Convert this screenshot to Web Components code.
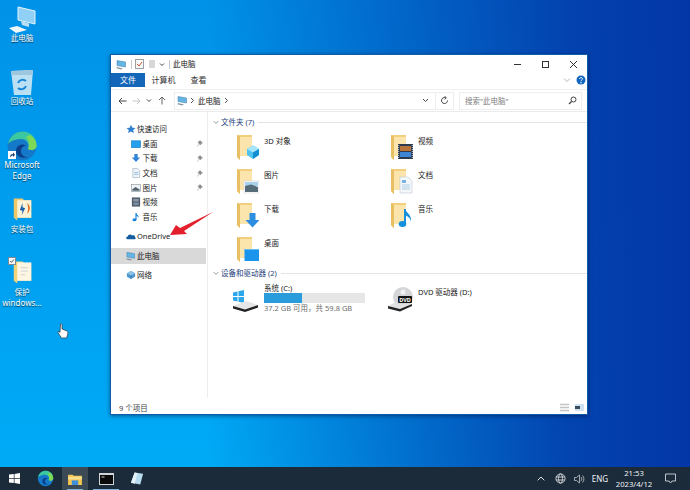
<!DOCTYPE html>
<html lang="zh">
<head>
<meta charset="utf-8">
<title>此电脑</title>
<style>
  html, body { margin: 0; height: 100%; overflow: hidden; }
  body { font-family: "Noto Sans", "Noto Sans CJK SC", sans-serif; }
</style>
</head>
<body>
<win-desktop>
  <desk-icon slot="icons" kind="pc" style="left:0;top:3px">此电脑</desk-icon>
  <desk-icon slot="icons" kind="bin" style="left:0;top:66px">回收站</desk-icon>
  <desk-icon slot="icons" kind="edge" style="left:0;top:130px"><span style="font-size:8px">Microsoft<br>Edge</span></desk-icon>
  <desk-icon slot="icons" kind="setup" style="left:0;top:194px">安装包</desk-icon>
  <desk-icon slot="icons" kind="docs" style="left:0;top:257px">保护<br><span style="font-size:8px">windows...</span></desk-icon>

  <explorer-window slot="window">
    <nav-item slot="nav" kind="star" level="0" style="margin-top:10px">快速访问</nav-item>
    <nav-item slot="nav" kind="desk" pinned>桌面</nav-item>
    <nav-item slot="nav" kind="down" pinned>下载</nav-item>
    <nav-item slot="nav" kind="doc" pinned>文档</nav-item>
    <nav-item slot="nav" kind="pic" pinned>图片</nav-item>
    <nav-item slot="nav" kind="film">视频</nav-item>
    <nav-item slot="nav" kind="note">音乐</nav-item>
    <nav-item slot="nav" kind="cloud" level="0" style="margin-top:5px">OneDrive</nav-item>
    <nav-item slot="nav" kind="pc" level="0" selected style="margin-top:4px">此电脑</nav-item>
    <nav-item slot="nav" kind="net" level="0" style="margin-top:4px">网络</nav-item>

    <group-head slot="content">文件夹 (7)</group-head>
    <div slot="content" style="display:grid;grid-template-columns:154px 1fr;grid-auto-rows:34px;margin:5px 0 0 29px">
      <folder-tile kind="cube">3D 对象</folder-tile>
      <folder-tile kind="film">视频</folder-tile>
      <folder-tile kind="pic">图片</folder-tile>
      <folder-tile kind="doc">文档</folder-tile>
      <folder-tile kind="down">下载</folder-tile>
      <folder-tile kind="note">音乐</folder-tile>
      <folder-tile kind="desk">桌面</folder-tile>
    </div>
    <group-head slot="content" style="margin-top:-2px">设备和驱动器 (2)</group-head>
    <div slot="content" style="display:grid;grid-template-columns:154px 1fr;margin:4px 0 0 24px">
      <drive-tile used="37.600" free="37.2 GB 可用，共 59.8 GB">系统 (C:)</drive-tile>
      <drive-tile kind="dvd">DVD 驱动器 (D:)</drive-tile>
    </div>
  </explorer-window>
</win-desktop>

<script>
const FOLDER = `<path d="M0 1 H15 V22 H3 V26 L0 23Z" fill="#f2cf7c"/><path d="M3 3 H15 V22 H3Z" fill="#fbe5ac"/><path d="M0 1 L3 3 V26 L0 23Z" fill="#e8bf63"/>`

const OVERLAYS = {
  cube: `<path d="M14 17 L20 13.500 L26 17 V23 L20 27 L14 23Z" fill="#4fc3ee"/><path d="M14 17 L20 20.500 L26 17 L20 13.500Z" fill="#a5e6fa"/><path d="M20 20.500 L26 17 V23 L20 27Z" fill="#128ed0"/>`,
  film: `<rect x="11" y="12" width="15" height="15" fill="#2f3b4c"/><rect x="13" y="14" width="11" height="5" fill="#b8743a"/><rect x="13" y="20" width="11" height="5" fill="#3d86d6"/><path d="M11.700 13v13M25.300 13v13" stroke="#dfe6ee" stroke-width=".9" stroke-dasharray="1 1"/>`,
  pic: `<rect x="11" y="15" width="15" height="12" fill="#fff" stroke="#c6ccd2" stroke-width=".5"/><rect x="12" y="16" width="13" height="4" fill="#a9d2ec"/><path d="M12 20 L18 18.500 L25 21 V26 H12Z" fill="#566c78"/>`,
  doc: `<path d="M13 11 H21 L25 15 V27 H13Z" fill="#f5f8fb" stroke="#bcc8d4" stroke-width=".6"/><path d="M15 19h8M15 21h8M15 23h8" stroke="#9cc0de" stroke-width=".8"/><rect x="15" y="14" width="4" height="3" fill="#7cb2de"/>`,
  down: `<path d="M16.500 13 H22.500 V20 H26.500 L19.500 27.500 L12.500 20 H16.500Z" fill="#2d8de0"/>`,
  note: `<path d="M18 9 V23" stroke="#1690dc" stroke-width="2" fill="none"/><ellipse cx="15.500" cy="24" rx="3.800" ry="3" fill="#1690dc"/><path d="M18 9 C19 13 25 14 24 22 C23.500 17 20 16.500 18 15Z" fill="#1690dc"/>`,
  desk: `<rect x="11.500" y="15" width="15" height="12" fill="#1b95ec"/><rect x="11.500" y="15" width="15" height="1" fill="#63bdf5"/>`
}

const NAV_ICONS = {
  star: `<path d="M5.500 .8 L7 4 L10.500 4.300 L7.900 6.500 L8.700 10 L5.500 8.200 L2.300 10 L3.100 6.500 L.5 4.300 L4 4Z" fill="#2f7fd0"/>`,
  desk: `<rect x=".5" y="2" width="10" height="7.500" fill="#25a0ec" stroke="#1679c4" stroke-width=".7"/>`,
  down: `<path d="M3.700 1 H7.300 V5 H10 L5.500 10 L1 5 H3.700Z" fill="#2f83d8"/>`,
  doc: `<path d="M2 .5 H7 L9.500 3 V10.500 H2Z" fill="#eef3f8" stroke="#8fa4b8" stroke-width=".6"/><path d="M3.500 5h4.500M3.500 7h4.500" stroke="#6fa5d4" stroke-width=".7"/>`,
  pic: `<rect x=".5" y="1.500" width="10" height="8" fill="#eef2f6" stroke="#7e8a94" stroke-width=".6"/><path d="M1.500 7 L5 4.500 L9.500 7.200 V8.500 H1.500Z" fill="#50626e"/>`,
  film: `<rect x="1" y=".5" width="9" height="10" fill="#4c5866"/><rect x="2.500" y="2" width="6" height="3" fill="#8b98a8"/><rect x="2.500" y="6" width="6" height="3" fill="#7c8fa6"/>`,
  note: `<path d="M5.500 1 V8.500" stroke="#1c86d6" stroke-width="1.300"/><ellipse cx="3.800" cy="8.500" rx="2.200" ry="1.700" fill="#1c86d6"/><path d="M5.500 1 C6 3 8.800 3.200 8.300 6.500 C7.800 4.600 6.500 4.400 5.500 4Z" fill="#1c86d6"/>`,
  cloud: `<path d="M1.500 9 C-.3 9 -.2 6.200 1.800 6.100 C2.200 3.300 5.800 3.100 6.600 5 C8.500 4 10.500 5.500 9.800 7 C11 7.200 11 9 9.800 9Z" fill="#155d9e"/>`,
  pc: `<path d="M1 1.500 L9.500 3 V8 L1 6.500Z" fill="#66b4e4" stroke="#3679a8" stroke-width=".5"/><path d="M.8 8 L7 9.400 L5 10.500 L.5 9.300Z" fill="#8496a4"/>`,
  net: `<path d="M5.500 1 L10 3.500 L10 7.500 L5.500 10 L1 7.500 V3.500Z" fill="#4f96cf"/><path d="M5.500 1 L10 3.500 L5.500 6 L1 3.500Z" fill="#8cc2e6"/><path d="M5.500 6 V10" stroke="#2f6c9e" stroke-width=".6"/>`
}

const DESK_ICONS = {
  pc: `<svg width="32" height="28" viewBox="0 0 32 28"><path d="M12 2 L29 6 V19 L12 15Z" fill="#8fd0f4" stroke="#e2f4fd" stroke-width="1"/><path d="M15 16 L23 18.500 L23 22 L16 20Z" fill="#bfe0f2"/><path d="M3 23 L11 21 L21 25 L10 28Z" fill="#f2f7fa"/></svg>`,
  bin: `<svg width="32" height="28" viewBox="0 0 32 28"><path d="M5 3 L27 2 L25 27 H8Z" fill="#cfe8f4" fill-opacity=".9"/><path d="M5 3 L27 2 L26 7 H6Z" fill="#9ec6dc"/><path d="M12 15 A5 5 0 0 1 20 13 M20 18 A5 5 0 0 1 12 20" stroke="#1a86d8" stroke-width="2" fill="none"/></svg>`,
  edge: `<svg width="32" height="32" viewBox="0 0 32 32"><circle cx="16" cy="16" r="14.500" fill="#1379c8"/><path d="M2 14 C4 3 14 1 18 1.600 C26 2.500 31 9 30.500 16 C30.500 20 25 21 22 19 C24 15 21 9 15 9 C9 9 3 12 2 14Z" fill="#3bc8a0"/><path d="M24 5 C29 8 31 13 30.500 16.500 C30 20 25 21 22 19 C24 15 23 10 20 7Z" fill="#7ed957"/><path d="M10 21 C10 27 17 29 22 27 C18 27 15 25 15 21 C15 18 17 16 20 16 C18 13 10 14 10 21Z" fill="#0c3f8a"/></svg>`,
  setup: `<svg width="21" height="26" viewBox="0 0 24 28"><path d="M2 2 H12 L14 4 H22 V24 H6 V27 L2 24Z" fill="#f0c868"/><path d="M6 4 H22 V24 H6Z" fill="#fbf3d8"/><path d="M12 7 L9 15 L12 16 L11 21 L15 13 L12 12Z" fill="#1f5fa8"/><path d="M17 7 C22 10 21 17 17 19 C19 15 19 11 17 7Z" fill="#e06a1c"/></svg>`,
  docs: `<svg width="21" height="26" viewBox="0 0 24 28"><path d="M2 2 H12 L14 4 H22 V24 H6 V27 L2 24Z" fill="#f3d27c"/><path d="M6 3 H22 V24 H6Z" fill="#fcf6e2"/><path d="M10 9h8M10 13h8M10 17h5" stroke="#d8dadb" stroke-width="1.500"/></svg>`
}

/* a bit of plumbing so each class only has to state its css and html */
const define = (name, css, render) => customElements.define(name, class extends HTMLElement {
  connectedCallback() {
    if (this.shadowRoot) return
    this.attachShadow({ mode: 'open' }).innerHTML = `<style>${css}</style>${render(this)}`
  }
})

define('win-desktop', `
  :host { display: block; position: relative; width: 690px; height: 490px; overflow: hidden;
    background:
      linear-gradient(90deg, rgba(3,54,166,0) 30%, rgba(3,54,166,.55) 62%, rgba(3,60,170,.92) 82%, #0336a6 100%),
      linear-gradient(180deg, #0092e8 0%, #00acf6 100%); }
  .desk { display: flex; flex-direction: column; height: 100%; }
  .canvas { flex: 1; position: relative; }
  .arrow { position: absolute; left: 166px; top: 208px; }
  .hand { position: absolute; left: 57px; top: 323px; }
`, () => `
  <div class="desk">
    <div class="canvas">
      <slot name="icons"></slot>
      <slot name="window"></slot>
      <svg class="arrow" width="52" height="30" viewBox="0 0 52 30"><path d="M47 4 L18 23 L21 26 L4 27 L10 17 L14 20 Z" fill="#e3202c"/></svg>
      <svg class="hand" width="12" height="16" viewBox="0 0 12 16"><path d="M3.500 1 C4.500 .3 5 1 5 2 V6 L10 8 C11 8.500 11 10 10.500 12 L9.500 15 H4.500 L1 9.500 C.8 8.500 2 8.300 3 9.500 Z" fill="#fff" stroke="#333" stroke-width=".7"/></svg>
    </div>
    <win-taskbar></win-taskbar>
  </div>
`)

define('desk-icon', `
  :host { position: absolute; display: flex; flex-direction: column; align-items: center; width: 44px;
    color: #fff; font-size: 7.500px; line-height: 10.500px; text-align: center; text-shadow: 0 1px 1px rgba(0,0,0,.65); }
  .art { height: 30px; display: flex; align-items: flex-start; justify-content: center; padding-top: 2px; box-sizing: border-box; }
  .edge .art { padding-top: 0; }
  .lbl { white-space: nowrap; }
  .short { position: absolute; left: 8px; top: 21px; width: 8px; height: 8px; background: #fff; }
  .check { position: absolute; left: 8px; top: 0; width: 8px; height: 8px; background: #f4f8fb; border: .5px solid #7d8a94; box-sizing: border-box; }
`, el => {
  const kind = el.getAttribute('kind')
  return `<div class="${kind}"><div class="art">${DESK_ICONS[kind]}</div></div>
    ${kind === 'docs' ? '<svg class="check" viewBox="0 0 8 8"><path d="M1.500 4 L3.300 5.800 L6.500 2" stroke="#222" fill="none"/></svg>' : ''}
    ${kind === 'edge' ? '<svg class="short" viewBox="0 0 8 8"><path d="M2 6.500 C2 4 3 3 5 3 V1.500 L7 3.800 L5 6 V4.500 C4 4.500 3 5 2 6.500Z" fill="#1c3c78"/></svg>' : ''}
    <div class="lbl"><slot></slot></div>`
})

define('explorer-window', `
  :host { position: absolute; left: 110px; top: 54px; width: 478px; height: 361px; display: flex; flex-direction: column;
    box-sizing: border-box; background: #fff; color: #222; border: 1px solid #0f5ca8;
    font-size: 7.500px; line-height: 10px; box-shadow: 0 1px 4px rgba(0,10,50,.5); }
  .title { height: 18px; display: flex; align-items: center; gap: 3.500px; padding-left: 5px; }
  .title .sep { width: 1px; height: 9px; background: #c9c9c9; }
  .controls { margin-left: auto; display: flex; }
  .controls i { width: 28px; height: 18px; display: flex; align-items: center; justify-content: center; }
  .tabs { height: 14px; display: flex; align-items: stretch; margin-bottom: 2px; font-size: 8px; }
  .tab { display: flex; align-items: center; justify-content: center; color: #333; }
  .tab.on { background: #1466b8; color: #fff; }
  .help { margin-left: auto; display: flex; align-items: center; gap: 5px; padding-right: 1px; }
  .addr { display: flex; align-items: center; padding-left: 4px; border-top: 1px solid #f0f0f0; border-bottom: 1px solid #ebebeb; box-sizing: border-box; height: 23px; }
  .navbtn { width: 14px; display: flex; justify-content: center; }
  .path { width: 262px; height: 18px; margin-left: 5px; display: flex; align-items: center; gap: 2px; border: 1px solid #eee; box-sizing: border-box; padding-left: 2px; }
  .path .end { margin-left: auto; width: 19px; height: 100%; display: flex; align-items: center; justify-content: center; }
  .refresh { width: 18px; height: 18px; display: flex; align-items: center; justify-content: center; border: 1px solid #eee; border-left: 0; box-sizing: border-box; }
  .search { width: 123px; height: 18px; margin-left: 5px; display: flex; align-items: center; justify-content: space-between; padding: 0 4px 0 5px; border: 1px solid #eee; box-sizing: border-box; color: #808080; }
  .body { flex: 1; display: flex; min-height: 0; }
  .nav { width: 96px; display: flex; flex-direction: column; border-right: 1px solid #ededed; flex: none; }
  .content { flex: 1; display: flex; flex-direction: column; padding-top: 4px; }
  .status { height: 16px; display: flex; align-items: center; padding: 3px 0 0 8px; box-sizing: border-box; color: #444; }
  .views { margin-left: auto; display: flex; gap: 6px; padding-right: 3px; align-items: center; }
`, () => `
  <div class="title">
    ${miniSvg(NAV_ICONS.pc, 11)}
    <span class="sep"></span>
    <svg width="9" height="10" viewBox="0 0 9 10"><rect x=".5" y=".5" width="8" height="9" fill="#fafafa" stroke="#9aa0a6"/><path d="M2 5 L4 7 L7 3" stroke="#c8502c" fill="none"/></svg>
    <svg width="8" height="10" viewBox="0 0 8 10"><rect x="1" y="1" width="6" height="8" fill="#d5d8db"/></svg>
    <svg width="6" height="5" viewBox="0 0 6 5"><path d="M1 1.500 L3 3.500 L5 1.500" stroke="#444" fill="none"/></svg>
    <span class="sep"></span>
    <span>此电脑</span>
    <div class="controls">
      <i><svg width="9" height="9" viewBox="0 0 9 9"><path d="M1 4.500 H8" stroke="#333"/></svg></i>
      <i><svg width="9" height="9" viewBox="0 0 9 9"><rect x="1.500" y="1.500" width="6" height="6" fill="none" stroke="#333"/></svg></i>
      <i><svg width="9" height="9" viewBox="0 0 9 9"><path d="M1 1 L8 8 M8 1 L1 8" stroke="#333"/></svg></i>
    </div>
  </div>
  <div class="tabs">
    <div class="tab on" style="width:34px">文件</div><div class="tab" style="width:37px">计算机</div><div class="tab" style="width:33px">查看</div>
    <div class="help">
      <svg width="8" height="6" viewBox="0 0 8 6"><path d="M1 1.500 L4 4.500 L7 1.500" stroke="#b8b8b8" fill="none"/></svg>
      <svg width="10" height="10" viewBox="0 0 10 10"><circle cx="5" cy="5" r="4.500" fill="#1266c0"/><path d="M3.500 4 C3.500 2.200 6.500 2.200 6.500 3.800 C6.500 5 5 5 5 6.200" stroke="#fff" fill="none"/><circle cx="5" cy="7.800" r=".7" fill="#fff"/></svg>
    </div>
  </div>
  <div class="addr">
    <span class="navbtn"><svg width="9" height="8" viewBox="0 0 9 8"><path d="M8.500 4 H1 M4 1 L1 4 L4 7" stroke="#444" fill="none"/></svg></span>
    <span class="navbtn"><svg width="9" height="8" viewBox="0 0 9 8"><path d="M.5 4 H8 M5 1 L8 4 L5 7" stroke="#c8c8c8" fill="none"/></svg></span>
    <span class="navbtn" style="width:12px"><svg width="6" height="5" viewBox="0 0 6 5"><path d="M1 1.500 L3 3.500 L5 1.500" stroke="#444" fill="none"/></svg></span>
    <span class="navbtn"><svg width="8" height="9" viewBox="0 0 8 9"><path d="M4 8.500 V1 M1 4 L4 1 L7 4" stroke="#666" fill="none"/></svg></span>
    <div class="path">
      ${miniSvg(NAV_ICONS.pc, 11)}
      <svg width="5" height="7" viewBox="0 0 5 7"><path d="M1 1 L3.500 3.500 L1 6" stroke="#555" fill="none"/></svg>
      <span style="margin-left:1px">此电脑</span>
      <svg width="5" height="7" viewBox="0 0 5 7" style="margin-left:1px"><path d="M1 1 L3.500 3.500 L1 6" stroke="#555" fill="none"/></svg>
      <span class="end"><svg width="7" height="5" viewBox="0 0 7 5"><path d="M1 1 L3.500 3.500 L6 1" stroke="#444" fill="none"/></svg></span>
    </div>
    <div class="refresh"><svg width="9" height="9" viewBox="0 0 9 9"><path d="M7.500 4.500 A3 3 0 1 1 5.500 1.700 M4.500 .2 L6.300 1.800 L4.500 3.300" stroke="#444" fill="none"/></svg></div>
    <div class="search"><span>搜索"此电脑"</span><svg width="9" height="9" viewBox="0 0 9 9"><circle cx="5.500" cy="3.500" r="2.500" fill="none" stroke="#444"/><path d="M3.500 5.500 L1 8" stroke="#444" stroke-width="1.300"/></svg></div>
  </div>
  <div class="body">
    <div class="nav"><slot name="nav"></slot></div>
    <div class="content"><slot name="content"></slot></div>
  </div>
  <div class="status">
    <span>9 个项目</span>
    <div class="views">
      <svg width="9" height="9" viewBox="0 0 9 9"><path d="M0 1.500h9M0 4.500h9M0 7.500h9" stroke="#c4c4c4" stroke-width="1.500"/></svg>
      <svg width="9" height="7" viewBox="0 0 9 7"><rect width="9" height="7" fill="#cfe3f3"/><rect y="2" width="5" height="3" fill="#3c4c5c"/></svg>
    </div>
  </div>
`)

function miniSvg(inner, size) {
  return `<svg width="${size}" height="${size}" viewBox="0 0 11 11">${inner}</svg>`
}

define('nav-item', `
  :host { display: flex; align-items: center; height: 14.600px; flex: none; }
  :host([selected]) { background: #d9d9d9; height: 16px; margin-right: 1px; }
  svg { flex: none; }
  .pin { margin-left: auto; margin-right: 4px; }
  span { white-space: nowrap; }
`, el => {
  const top = el.getAttribute('level') === '0'
  return `<span style="width:${top ? 15 : 20}px"></span>
    ${miniSvg(NAV_ICONS[el.getAttribute('kind')], 10)}
    <span style="margin-left:${top ? 1 : 1.500}px"><slot></slot></span>
    ${el.hasAttribute('pinned') ? '<svg class="pin" width="6" height="7" viewBox="0 0 6 7"><path d="M3 .5 L5.500 3 L4 3.500 L3.500 5 L1 2.500Z M2 4 L.5 6.500" fill="#888" stroke="#888" stroke-width=".5"/></svg>' : ''}`
})

define('group-head', `
  :host { display: flex; align-items: center; height: 12px; padding-left: 5px; color: #1e3d7a; }
  .txt { margin-left: 2px; white-space: nowrap; }
  .rule { flex: 1; height: 1px; background: #e4e4e4; margin: 0 0 0 4px; }
`, () => `<svg width="6" height="5" viewBox="0 0 6 5"><path d="M.7 1 L3 3.500 L5.300 1" stroke="#9a9a9a" fill="none"/></svg>
  <span class="txt"><slot></slot></span><span class="rule"></span>`)

define('folder-tile', `
  :host { display: flex; align-items: flex-start; gap: 5px; color: #222; }
  svg { margin-top: 1px; flex: none; }
  .t { margin-top: 3px; white-space: nowrap; }
`, el => `<svg width="22" height="26" viewBox="0 0 22 26">${FOLDER}<g transform="translate(-4 -2)">${OVERLAYS[el.getAttribute('kind')]}</g></svg>
  <span class="t"><slot></slot></span>`)

define('drive-tile', `
  :host { display: flex; align-items: flex-start; gap: 5px; }
  svg { flex: none; margin-top: 5px; }
  svg.d { margin-top: 3px; }
  .info { display: flex; flex-direction: column; }
  .bar { width: 101px; height: 10px; background: #e6e6e6; }
  .bar i { display: block; height: 100%; background: #2b9cdb; }
  .sub { color: #6d6d6d; white-space: nowrap; }
  .dvd { margin-top: 4px; white-space: nowrap; }
  text { font: bold 5.500px "Noto Sans", sans-serif; fill: #fff; }
`, el => el.getAttribute('kind') === 'dvd'
  ? `<svg class="d" width="27" height="26" viewBox="0 0 27 26">
       <circle cx="17" cy="11" r="10" fill="#d4d5d6"/><circle cx="17" cy="6" r="2.500" fill="#f2f2f2"/>
       <rect x="12" y="10" width="14" height="7" rx="1" fill="#141414"/><text x="19" y="15.500" text-anchor="middle">DVD</text>
       <path d="M2 20 L10 16 L12 18 H26 L14 23Z" fill="#dfe1e2"/><path d="M2 20 L14 23 L26 18 V20 L14 25.500 L2 22.500Z" fill="#222"/></svg>
     <span class="dvd"><slot></slot></span>`
  : `<svg width="27" height="24" viewBox="0 0 27 24">
       <path d="M1 4.500 L5.500 3.500 V8 H1Z M6.500 3.300 L12 2 V8 H6.500Z M1 9 H5.500 V13.500 L1 12.500Z M6.500 9 H12 V15 L6.500 13.700Z" fill="#2aa8ea"/>
       <path d="M1 18 L14 13 L26 17 L13 21.500Z" fill="#e4e6e7"/><path d="M1 18 L13 21.500 L26 17 V19.500 L13 24 L1 20.500Z" fill="#222"/></svg>
     <div class="info"><span><slot></slot></span>
       <div class="bar"><i style="width:${el.getAttribute('used')}%"></i></div>
       <span class="sub">${el.getAttribute('free')}</span></div>`)

define('win-taskbar', `
  :host { display: flex; align-items: stretch; height: 23px; flex: none; background: #1b2b3a; color: #eef2f5; font-size: 8px; }
  .b { display: flex; align-items: center; justify-content: center; position: relative; }
  .on { background: #3c4a56; }
  .line::after { content: ""; position: absolute; left: 5px; right: 5px; bottom: 0; height: 1px; background: #7fb4dc; }
  .tray { margin-left: auto; display: flex; align-items: center; }
  .clock { width: 44px; text-align: center; line-height: 11px; font-size: 7.700px; }
`, () => `
  <span class="b" style="width:29px"><svg width="11" height="11" viewBox="0 0 11 11"><path d="M0 1.600 L4.800 1 V5.200 H0Z M5.500 .9 L11 0 V5.200 H5.500Z M0 5.900 H4.800 V10 L0 9.400Z M5.500 5.900 H11 V11 L5.500 10.100Z" fill="#fff"/></svg></span>
  <span class="b" style="width:33px"><svg width="17" height="17" viewBox="0 0 32 32">${DESK_ICONS.edge.replace(/<\/?svg[^>]*>/g, '')}</svg></span>
  <span class="b on line" style="width:26px"><svg width="14" height="12" viewBox="0 0 15 13"><path d="M0 2 H5 L6 3 H15 V13 H0Z" fill="#f4c64e"/><rect y="4" width="15" height="3" fill="#f8dd8e"/><rect x="4" y="8" width="7" height="5" fill="#3d8fd8"/></svg></span>
  <span class="b line" style="width:36px"><svg width="15" height="12" viewBox="0 0 15 12"><rect width="15" height="12" fill="#cfd4d8"/><rect x="1" y="2" width="13" height="9" fill="#0a0a0a"/><path d="M2.500 4h3" stroke="#ccc"/></svg></span>
  <span class="b" style="width:25px"><svg width="14" height="15" viewBox="0 0 15 15"><path d="M5 1 L14 2.500 L11 14 L1 12Z" fill="#b8dcef"/><path d="M5 1 L8 2 L5 13 L1 12Z" fill="#e6f2f8"/></svg></span>
  <div class="tray">
    <span class="b" style="width:19px"><svg width="8" height="5" viewBox="0 0 8 5"><path d="M.7 4.300 L4 1 L7.300 4.300" stroke="#e4e8ec" fill="none"/></svg></span>
    <span class="b" style="width:20px"><svg width="11" height="11" viewBox="0 0 11 11" fill="none" stroke="#e4e8ec" stroke-width=".8"><circle cx="5.500" cy="5.500" r="4.600"/><ellipse cx="5.500" cy="5.500" rx="2" ry="4.600"/><path d="M1 4h9M1 7h9"/></svg></span>
    <span class="b" style="width:18px"><svg width="11" height="10" viewBox="0 0 11 10" fill="none" stroke="#c2c8cd" stroke-width=".8"><path d="M.5 3.500 H2.500 L5.500 1 V9 L2.500 6.500 H.5Z M7 3 A3 3 0 0 1 7 7 M8.500 1.500 A5 5 0 0 1 8.500 8.500"/></svg></span>
    <span class="b" style="width:24px">ENG</span>
    <span class="b clock">21:53<br>2023/4/12</span>
    <span class="b" style="width:28px"><svg width="11" height="11" viewBox="0 0 11 11"><path d="M.5 1 H10.500 V8 H7 L5.500 10 L4 8 H.5Z" fill="none" stroke="#e4e8ec" stroke-width=".8"/></svg></span>
    <span style="width:6px"></span>
  </div>
`)
</script>
</body>
</html>
